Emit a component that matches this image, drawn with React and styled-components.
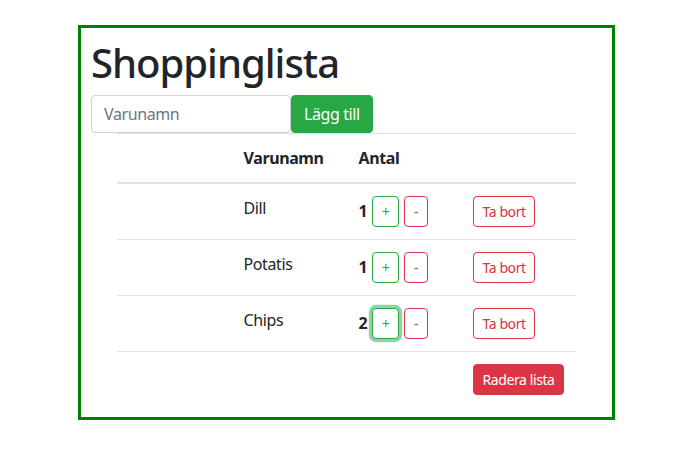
import React, { useState } from 'react';
import styled, { createGlobalStyle, css } from 'styled-components';

const GlobalStyle = createGlobalStyle`
  body {
    margin: 0;
    background: #fff;
    color: #212529;
    font-family: "Noto Sans", "Open Sans", sans-serif;
    font-size: 16px;
    line-height: 1.5;
    letter-spacing: -0.4px;
  }
`;

const Frame = styled.div`
  box-sizing: border-box;
  width: 537px;
  margin: 25px 0 0 78px;
  padding: 11px 10px 10px;
  border: 3px solid #008000;
`;

const Title = styled.h1`
  margin: 0 0 8px;
  font-size: 40px;
  font-weight: 500;
  line-height: 1.2;
  letter-spacing: -1px;
`;

const AddForm = styled.form`
  display: flex;
`;

const NameInput = styled.input`
  box-sizing: border-box;
  width: 200px;
  height: 38px;
  padding: 6px 12px;
  font: inherit;
  letter-spacing: inherit;
  color: #495057;
  border: 1px solid #ced4da;
  border-radius: 4px;
  &::placeholder {
    color: #6c757d;
  }
`;

const Button = styled.button`
  box-sizing: border-box;
  display: inline-block;
  font-family: inherit;
  letter-spacing: inherit;
  white-space: nowrap;
  border-radius: 4px;
  border: 1px solid transparent;
  cursor: pointer;
  line-height: 1.5;
  ${({ $size }) =>
    $size === 'sm'
      ? css`
          padding: 4px 8px;
          font-size: 14px;
        `
      : css`
          padding: 6px 12px;
          font-size: 16px;
        `}
  ${({ $variant }) => {
    switch ($variant) {
      case 'success':
        return css`
          background: #28a745;
          border-color: #28a745;
          color: #fff;
        `;
      case 'danger':
        return css`
          background: #dc3545;
          border-color: #dc3545;
          color: #fff;
        `;
      case 'outline-success':
        return css`
          background: #fff;
          border-color: #28a745;
          color: #28a745;
        `;
      default:
        return css`
          background: #fff;
          border-color: #dc3545;
          color: #dc3545;
        `;
    }
  }}
  ${({ $focused }) =>
    $focused &&
    css`
      box-shadow: 0 0 0 3.2px rgba(40, 167, 69, 0.5);
    `}
`;

const QtyButton = styled(Button)`
  margin-left: 5px;
  vertical-align: baseline;
  letter-spacing: 0;
  min-width: ${({ $width }) => $width}px;
  padding-left: 0;
  padding-right: 0;
  text-align: center;
`;

const Table = styled.table`
  width: 90%;
  margin: 0 auto;
  border-collapse: collapse;
  table-layout: fixed;
`;

const HeadCell = styled.th`
  padding: 12px;
  text-align: left;
  font-weight: 700;
  border-top: 1px solid #dee2e6;
  border-bottom: 2px solid #dee2e6;
`;

const Cell = styled.td`
  padding: 12px;
  vertical-align: top;
  border-top: 1px solid #dee2e6;
`;

const Qty = styled.b`
  font-weight: 700;
`;

export default function App() {
  const [items] = useState([
    { name: 'Dill', count: 1 },
    { name: 'Potatis', count: 1 },
    { name: 'Chips', count: 2 },
  ]);

  return (
    <>
      <GlobalStyle />
      <Frame>
        <Title>Shoppinglista</Title>
        <AddForm onSubmit={(e) => e.preventDefault()}>
          <NameInput placeholder="Varunamn" />
          <Button $variant="success">Lägg till</Button>
        </AddForm>
        <Table>
          <thead>
            <tr>
              <HeadCell />
              <HeadCell>Varunamn</HeadCell>
              <HeadCell>Antal</HeadCell>
              <HeadCell />
            </tr>
          </thead>
          <tbody>
            {items.map((item, i) => (
              <tr key={item.name}>
                <Cell />
                <Cell>{item.name}</Cell>
                <Cell>
                  <Qty>{item.count}</Qty>
                  <QtyButton $size="sm" $width={27} $variant="outline-success" $focused={i === 2}>+</QtyButton>
                  <QtyButton $size="sm" $width={24} $variant="outline-danger">-</QtyButton>
                </Cell>
                <Cell>
                  <Button $size="sm" $variant="outline-danger">Ta bort</Button>
                </Cell>
              </tr>
            ))}
            <tr>
              <Cell />
              <Cell />
              <Cell />
              <Cell>
                <Button $size="sm" $variant="danger">Radera lista</Button>
              </Cell>
            </tr>
          </tbody>
        </Table>
      </Frame>
    </>
  );
}
